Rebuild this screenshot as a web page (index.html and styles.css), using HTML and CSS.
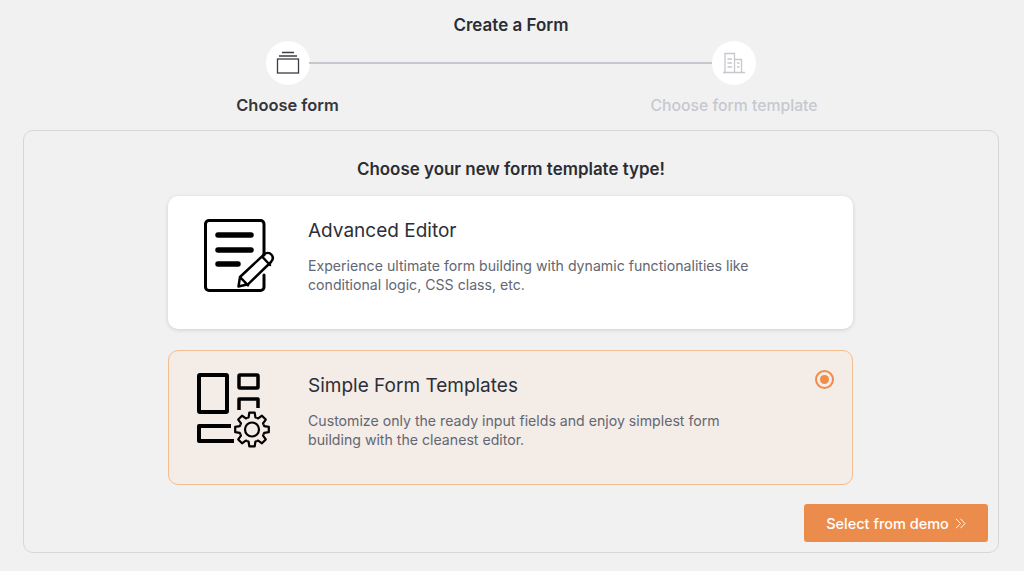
FILE: index.html
```html
<!DOCTYPE html>
<html lang="en">
<head>
<meta charset="utf-8">
<title>Create a Form</title>
<link rel="stylesheet" href="styles.css">
</head>
<body>
<main class="page">
  <h1 class="title">Create a Form</h1>
  <div class="stepper">
    <div class="step step-active">
      <div class="step-circle">
        <svg width="24" height="24" viewBox="0 0 24 24" fill="none" stroke="#3a3d44" stroke-width="1.300">
          <rect x="1.500" y="8" width="21" height="14"/>
          <path d="M3 5h18M6 1.500h12" stroke-width="1.500"/>
        </svg>
      </div>
      <div class="step-label">Choose form</div>
    </div>
    <div class="step-line"></div>
    <div class="step step-muted">
      <div class="step-circle">
        <svg width="24" height="24" viewBox="0 0 24 24" fill="none" stroke="#c6c8d0" stroke-width="1.300">
          <path d="M1 21.500h22M3 21.500V2.500h9.500v19M12.500 8.500h7v13"/>
          <path d="M5.500 8h4.500M5.500 12h4.500M5.500 16h4.500M15 12h2.500M15 16h2.500"/>
        </svg>
      </div>
      <div class="step-label">Choose form template</div>
    </div>
  </div>

  <section class="panel">
    <h2 class="panel-title">Choose your new form template type!</h2>
    <div class="options">
      <article class="option">
        <div class="option-icon">
          <svg width="80" height="90" viewBox="197 210 80 90" fill="none" stroke="#000" stroke-linecap="round" stroke-linejoin="round">
            <path d="M264 254V223a3.500 3.500 0 0 0-3.500-3.500H209a3.500 3.500 0 0 0-3.500 3.500v63a3.500 3.500 0 0 0 3.500 3.500h51.500a3.500 3.500 0 0 0 3.500-3.500V274" stroke-width="3"/>
            <path d="M218 234h33M218 249h33M218 263h20" stroke-width="5.500"/>
            <path d="M238.500 285.500l1.500-9.500 24-22.500c2.500-2.200 5.500-2 7.300 0s2 5-.3 7.500l-23 22.300zM240 276l8 8.300M262 255.500l8 8.500" stroke-width="2.500"/>
          </svg>
        </div>
        <div class="option-text">
          <h3 class="option-title">Advanced Editor</h3>
          <p class="option-desc">Experience ultimate form building with dynamic functionalities like conditional logic, CSS class, etc.</p>
        </div>
      </article>
      <article class="option option-selected">
        <div class="option-icon">
          <svg width="80" height="90" viewBox="197 365 80 90" fill="none" stroke="#000" stroke-linejoin="round">
            <defs>
              <path id="gear-tooth" d="M-4.800-11.500L-3.400-12.200-2.700-16.800H2.700L3.400-12.200 4.800-11.500" stroke-width="2.200"/>
            </defs>
            <rect x="199" y="375" width="28" height="37" rx="1" stroke-width="4"/>
            <rect x="239" y="375" width="19" height="13" rx="1" stroke-width="3.500"/>
            <path d="M239 410V399h19v9" stroke-width="3.500"/>
            <path d="M231 426H199v15h35" stroke-width="4"/>
            <circle cx="252" cy="429.500" r="7" stroke-width="2.200"/>
            <g transform="translate(252 429.500)">
              <use href="#gear-tooth"/>
              <use href="#gear-tooth" transform="rotate(45)"/>
              <use href="#gear-tooth" transform="rotate(90)"/>
              <use href="#gear-tooth" transform="rotate(135)"/>
              <use href="#gear-tooth" transform="rotate(180)"/>
              <use href="#gear-tooth" transform="rotate(225)"/>
              <use href="#gear-tooth" transform="rotate(270)"/>
              <use href="#gear-tooth" transform="rotate(315)"/>
            </g>
          </svg>
        </div>
        <div class="option-text">
          <h3 class="option-title">Simple Form Templates</h3>
          <p class="option-desc">Customize only the ready input fields and enjoy simplest form building with the cleanest editor.</p>
        </div>
        <span class="radio"><span class="radio-dot"></span></span>
      </article>
    </div>
    <div class="actions">
      <button class="btn" type="button">Select from demo
        <svg width="11" height="11" viewBox="0 0 11 11" fill="none" stroke="#fff" stroke-width="1"><path d="M1 .8l4.500 4.700L1 10.200M5.500 .8l4.500 4.700-4.500 4.700"/></svg>
      </button>
    </div>
  </section>
</main>
</body>
</html>
```
FILE: styles.css
```css
* { box-sizing: border-box; }
html, body { margin: 0; padding: 0; }
body {
  width: 1024px;
  height: 571px;
  overflow: hidden;
  background: #f1f1f1;
  font-family: Inter, "Liberation Sans", sans-serif;
  color: #24262c;
}
.page { padding: 14px 25px 0 23px; }
.title {
  margin: 0;
  font-size: 17px;
  line-height: 22px;
  font-weight: 600;
  text-align: center;
  color: #2b2d33;
}
.stepper {
  display: flex;
  align-items: flex-start;
  margin: 5px 0 0 0;
  padding-left: 213px;
  height: 89px;
}
.step {
  display: flex;
  flex-direction: column;
  align-items: center;
  flex: none;
}
.step-active { width: 103px; }
.step-muted { width: 168px; }
.step-circle {
  width: 44px;
  height: 44px;
  border-radius: 50%;
  background: #fff;
  display: flex;
  align-items: center;
  justify-content: center;
}
.step-label {
  margin-top: 10px;
  font-size: 16.450px;
  line-height: 20px;
  font-weight: 600;
  white-space: nowrap;
  color: #33363c;
}
.step-muted .step-label { margin-top: 11px; color: #c6c8d0; font-size: 15.750px; font-weight: 500; }
.step-line {
  width: 403px;
  height: 2px;
  margin: 21px -62px 0 -30px;
  background: #c6c7cf;
  flex: none;
}
.panel {
  height: 423px;
  border: 1px solid #d6d7da;
  border-radius: 10px;
  padding: 27px 10px 0 144px;
  display: flex;
  flex-direction: column;
}
.panel-title {
  margin: 0;
  width: 686px;
  font-size: 16.950px;
  line-height: 22px;
  font-weight: 600;
  text-align: center;
  color: #2b2d33;
}
.options {
  display: flex;
  flex-direction: column;
  gap: 21px;
  margin-top: 16px;
  width: 685px;
}
.option {
  display: flex;
  height: 134px;
  background: #fff;
  border-radius: 10px;
  box-shadow: 0 1px 4px rgba(0, 0, 0, .14);
  padding: 0 0 0 29px;
  position: relative;
}
.option:first-child { height: 133px; margin-bottom: 0; }
.option-selected {
  height: 135px;
  background: #f4ece6;
  border: 1px solid #f3bd92;
  box-shadow: none;
  padding-left: 28px;
}
.option-icon { width: 111px; flex: none; padding-top: 15px; }
.option-selected .option-icon { padding-top: 14px; }
.option-text { width: 450px; padding-top: 22px; }
.option-title {
  margin: 0;
  font-size: 19px;
  line-height: 26px;
  font-weight: 400;
  color: #2b2f3a;
}
.option-desc {
  margin: 12px 0 0;
  font-size: 14.130px;
  line-height: 19px;
  color: #636773;
}
.radio {
  position: absolute;
  top: 19px;
  right: 18px;
  width: 19px;
  height: 19px;
  border-radius: 50%;
  border: 2.500px solid #ee8d4c;
  display: flex;
  align-items: center;
  justify-content: center;
}
.radio-dot { width: 9px; height: 9px; border-radius: 50%; background: #ee8d4c; }
.actions {
  display: flex;
  justify-content: flex-end;
  margin-top: 19px;
}
.btn {
  width: 184px;
  height: 38px;
  border: 0;
  border-radius: 3px;
  background: #ec8c4c;
  color: #fff;
  font-family: inherit;
  font-size: 14.500px;
  font-weight: 500;
  display: flex;
  align-items: center;
  justify-content: center;
  gap: 6px;
}
```
